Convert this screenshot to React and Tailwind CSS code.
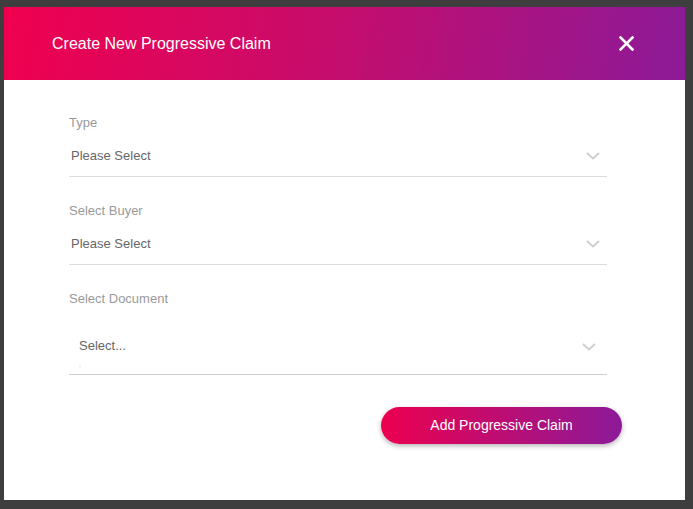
const Chevron = ({ className = "" }) => (
  <svg width="14" height="8" viewBox="0 0 14 8" className={className}>
    <path d="M1 1l6 5.5L13 1" fill="none" stroke="#cfcfcf" strokeWidth="2" />
  </svg>
);

function Field({ label, value, className = "" }) {
  return (
    <div className={className}>
      <div className="text-[13px] leading-4 text-[#9a9a9a]">{label}</div>
      <div className="flex items-center justify-between border-b border-[#dcdcdc] pt-[17px] pb-[12px] pl-[2px] pr-[7px]">
        <span className="text-[13px] leading-4 text-[#666]">{value}</span>
        <Chevron />
      </div>
    </div>
  );
}

export default function App() {
  return (
    <div className="min-h-screen bg-[#3e3e3e] pt-[7px] pl-[4px] font-['Liberation_Sans',Arial,sans-serif]">
      <div className="h-[493px] w-[681px] bg-white">
        <header className="flex h-[73px] items-center justify-between bg-[linear-gradient(100deg,#f0004f_0%,#c90c6a_45%,#8c1a98_100%)] pl-[48px] pr-[51px]">
          <h1 className="text-[16px] text-white">Create New Progressive Claim</h1>
          <svg width="15" height="15" viewBox="0 0 15 15">
            <path d="M1.5 1.5l12 12M13.5 1.5l-12 12" stroke="#fff" strokeWidth="2.6" strokeLinecap="square" />
          </svg>
        </header>

        <div className="pl-[65px] pr-[78px] pt-[35px]">
          <Field label="Type" value="Please Select" className="mb-[26px]" />
          <Field label="Select Buyer" value="Please Select" className="mb-[26px]" />

          <div>
            <div className="text-[13px] leading-4 text-[#9a9a9a]">Select Document</div>
            <div className="flex items-start justify-between border-b border-[#cfcfcf] pt-[31px] pl-[10px] pr-[11px]">
              <div className="flex flex-col">
                <span className="text-[13px] leading-4 text-[#666]">Select...</span>
                <span className="mt-[12px] mb-[7px] h-[1px] w-[2px] bg-[#e4e4e4]"></span>
              </div>
              <Chevron className="mt-[5px]" />
            </div>
          </div>

          <div className="flex justify-end pt-[32px]">
            <button className="-mr-[15px] h-[37px] w-[241px] rounded-full bg-[linear-gradient(90deg,#ec004f,#8c1a98)] text-[14px] text-white shadow-[0_2px_5px_rgba(0,0,0,0.3)]">
              Add Progressive Claim
            </button>
          </div>
        </div>
      </div>
    </div>
  );
}
